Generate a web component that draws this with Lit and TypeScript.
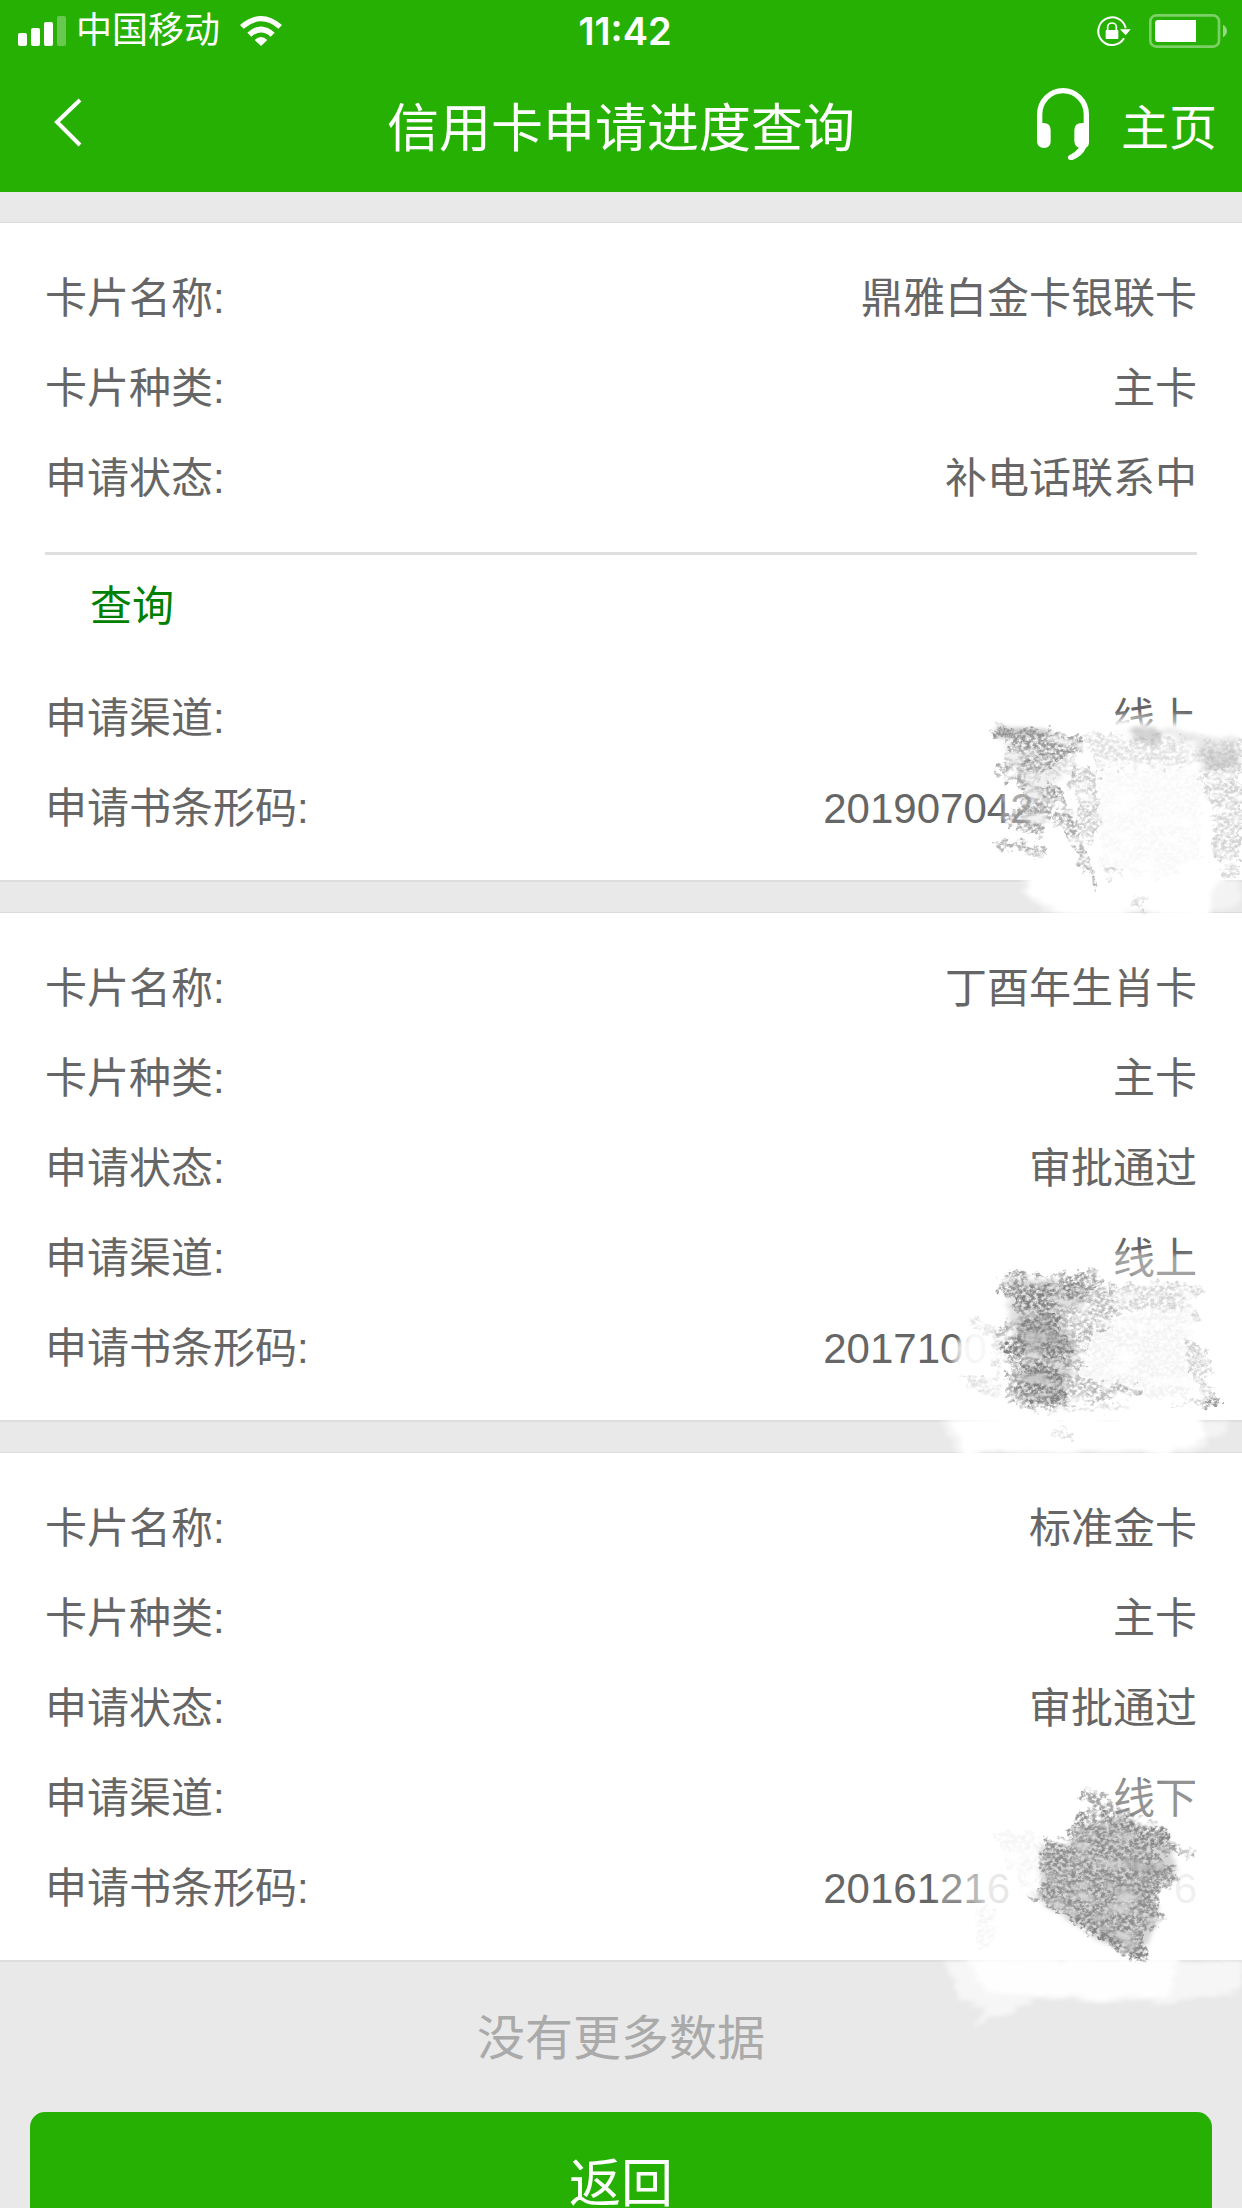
import { LitElement, html, css, svg, nothing } from "lit";
import { customElement, property } from "lit/decorators.js";

interface Application {
  name: string;
  kind: string;
  status: string;
  followUp: boolean;
  channel: string;
  codeStart: string;
  codeEnd: string;
  smudge: number;
}

const APPLICATIONS: Application[] = [
  { name: "鼎雅白金卡银联卡", kind: "主卡", status: "补电话联系中", followUp: true, channel: "线上", codeStart: "201907042", codeEnd: "", smudge: 0 },
  { name: "丁酉年生肖卡", kind: "主卡", status: "审批通过", followUp: false, channel: "线上", codeStart: "2017100", codeEnd: "", smudge: 1 },
  { name: "标准金卡", kind: "主卡", status: "审批通过", followUp: false, channel: "线下", codeStart: "20161216", codeEnd: "6", smudge: 2 },
];

/* Chalk strokes that cover the private part of each barcode number. */
const SMUDGES = [
  svg`
    <g transform="translate(0 -60)">
      <g class="erase" filter="url(#soft)">
        <path opacity=".4" d="M985 160 1260 160 1260 230 985 230Z"/>
        <path d="M1000 192 1250 188 1250 240 1000 240Z"/>
        <path opacity=".45" d="M665 370 750 370 750 500 665 500Z"/>
        <path d="M750 215 1386 215 1386 640 1300 680 1290 762 830 762 745 700 750 640Z"/>
        <path opacity=".45" d="M730 662 1386 662 1386 715 1330 750 800 758 730 700Z"/>
      </g>
      <g class="chalk" filter="url(#grain)">
        <path opacity=".8" d="M640 200 760 208 900 225 905 275 850 290 700 300 670 290 690 245 640 225Z"/>
        <path opacity=".65" d="M650 310 760 290 830 300 780 350 760 380 840 390 830 420 800 500 770 540 700 505 660 480 720 440 740 400 690 370 655 345Z"/>
        <path opacity=".6" d="M648 545 730 545 800 560 795 590 750 590 720 565 650 568Z"/>
        <path opacity=".65" d="M790 350 850 400 880 470 900 520 940 640 965 685 945 700 920 640 880 560 820 480 835 430Z"/>
        <path opacity=".4" d="M870 330 950 330 960 480 930 560 890 500 900 420 860 370Z"/>
        <path opacity=".25" d="M900 220 1386 240 1386 330 950 320ZM780 290 900 280 900 340 790 350Z"/>
        <path opacity=".35" d="M1270 330 1386 330 1386 600 1300 600 1310 460 1260 380Z"/>
        <path opacity=".3" d="M970 620 1030 620 1020 650 970 650ZM1310 620 1380 615 1370 650 1325 645ZM1055 700 1100 700 1095 760 1060 750Z"/>
        <path opacity=".06" d="M960 330 1260 330 1260 600 1130 660 960 620Z"/>
      </g>
      <g class="tone" filter="url(#soft)">
        <path opacity=".5" d="M650 205 730 205 835 218 780 226 650 228Z"/>
        <path opacity=".35" d="M1060 210 1130 200 1145 240 1110 255 1060 235Z"/>
        <path opacity=".18" d="M1000 212 1240 215 1386 250 1386 325 1270 325 1240 240Z"/>
        <path opacity=".15" d="M1275 275 1350 275 1386 325 1275 325ZM880 230 900 230 905 275 880 275Z"/>
        <path opacity=".12" d="M680 220 880 230 860 290 780 500 720 490 740 380 680 290Z"/>
      </g>
    </g>`,
  svg`
    <g class="erase" filter="url(#soft)">
      <path opacity=".4" d="M1000 90 1250 110 1250 180 1000 180Z"/>
      <path opacity=".65" d="M500 390 560 335 640 320 640 440 520 440Z"/>
      <path opacity=".85" d="M545 310 700 300 700 520 640 520 545 440Z"/>
      <path opacity=".5" d="M480 602 1340 602 1345 640 1280 660 1240 700 530 696Z"/>
      <path d="M500 590 1260 590 1270 650 1160 697 560 697Z"/>
    </g>
    <g class="chalk" filter="url(#grain)">
      <path opacity=".75" d="M655 180 700 145 730 170 950 148 965 175 940 230 700 245 660 215Z"/>
      <path d="M690 200 880 180 920 230 830 260 830 320 880 380 880 420 820 440 860 500 860 550 700 540 720 440 670 400 710 310Z"/>
      <path opacity=".65" d="M645 350 720 250 710 530 670 545 690 450Z"/>
      <path opacity=".5" d="M830 240 1000 190 1000 320 930 340 900 480 1090 500 1090 525 880 550 780 570 700 550 840 480Z"/>
      <path opacity=".32" d="M990 205 1150 185 1275 200 1270 220 1240 240 1260 310 1245 330 1220 260 1000 280Z"/>
      <path opacity=".22" d="M570 285 660 330 660 530 600 520 530 465 640 480 640 360 570 320Z"/>
      <path opacity=".35" d="M1210 350 1240 360 1300 420 1300 450 1260 460 1320 540 1310 560 1180 555 1270 530 1230 460Z"/>
      <path opacity=".7" d="M1280 530 1325 540 1305 565 1275 560Z"/>
      <path opacity=".1" d="M900 330 1240 240 1230 540 900 520Z"/>
      <path opacity=".25" d="M830 615 875 640 875 655 825 650ZM780 565 1050 555 1050 568 800 575Z"/>
    </g>
    <g class="tone" filter="url(#soft)">
      <path opacity=".25" d="M680 180 900 180 940 230 850 290 890 390 850 560 700 540 720 420 690 300Z"/>
      <path opacity=".3" d="M720 290 810 280 880 390 830 410 720 390ZM700 450 840 450 850 490 700 470ZM710 520 860 518 860 535 710 532Z"/>
    </g>`,
  svg`
    <g class="erase" filter="url(#soft)">
      <path opacity=".3" d="M985 50 1255 50 1255 180 985 180Z"/>
      <path opacity=".3" d="M480 330 560 330 560 435 480 435Z"/>
      <path opacity=".55" d="M550 330 620 330 620 440 550 440Z"/>
      <path opacity=".85" d="M610 320 1260 320 1260 440 610 440Z"/>
      <path opacity=".6" d="M490 602 1386 602 1386 700 1180 725 760 715 680 770 575 800 620 750 545 715Z"/>
      <path opacity=".85" d="M560 590 1200 590 1160 715 620 705Z"/>
    </g>
    <g class="chalk" filter="url(#grain)">
      <path opacity=".7" d="M905 85 930 88 1010 140 1160 205 1180 250 1245 275 1240 295 1120 265 1000 180 900 115Z"/>
      <path opacity=".85" d="M900 150 960 145 1020 170 1165 215 1180 250 1110 270 1195 345 1170 390 1125 400 1145 480 1130 515 1090 510 1100 600 1080 612 750 405 780 390 775 290 800 230 870 250 870 200Z"/>
      <path opacity=".8" d="M748 395 880 460 1040 550 1103 590 1085 612 1040 590 750 408Z"/>
      <path opacity=".08" d="M640 205 780 230 760 400 690 340ZM585 440 640 450 650 540 590 570Z"/>
    </g>
    <g class="tone" filter="url(#soft)">
      <path opacity=".35" d="M890 200 1010 180 1165 230 1190 350 1125 390 1130 500 1080 590 780 410 785 260 870 260Z"/>
      <path opacity=".3" d="M1010 280 1150 330 1190 355 1110 350 1010 300ZM760 400 900 475 1060 560 1100 600 1060 590 900 500 760 412ZM1000 375 1090 380 1080 405 1000 395Z"/>
    </g>`,
];

@customElement("application-card")
export class ApplicationCard extends LitElement {
  @property({ attribute: false }) item!: Application;

  static styles = css`
    :host {
      display: block;
      position: relative;
      padding: 31px 45px 26px;
      background: #fff;
      border-top: 1px solid #dcdcdc;
      border-bottom: 2px solid #dedede;
    }
    dl {
      margin: 0;
    }
    .row {
      display: flex;
      justify-content: space-between;
      line-height: 90px;
    }
    dd {
      margin: 0;
    }
    .code {
      display: flex;
      justify-content: space-between;
      width: 16ch;
    }
    .ghost {
      color: #999;
    }
    .follow {
      margin-top: 28px;
      padding: 7px 45px 22px;
      border-top: 3px solid #dfdfdf;
      line-height: 90px;
    }
    .follow a {
      color: #008000;
      text-decoration: none;
    }
    .smudge {
      position: absolute;
      right: 0;
      bottom: -100px;
      width: 462px;
      height: 320px;
      z-index: 1;
      pointer-events: none;
    }
    .erase {
      fill: #fff;
    }
    .chalk {
      fill: #808080;
    }
    .tone {
      fill: #888;
    }
  `;

  private row(label: string, value: unknown) {
    return html`<div class="row"><dt>${label}:</dt>${value}</div>`;
  }

  render() {
    const a = this.item;
    return html`
      <dl>
        ${this.row("卡片名称", html`<dd>${a.name}</dd>`)}
        ${this.row("卡片种类", html`<dd>${a.kind}</dd>`)}
        ${this.row("申请状态", html`<dd>${a.status}</dd>`)}
      </dl>
      ${a.followUp ? html`<div class="follow"><a href="#query">查询</a></div>` : nothing}
      <dl>
        ${this.row("申请渠道", html`<dd>${a.channel}</dd>`)}
        ${this.row(
          "申请书条形码",
          html`<dd class="code"><span>${a.codeStart}</span>${a.codeEnd ? html`<span class="ghost">${a.codeEnd}</span>` : nothing}</dd>`
        )}
      </dl>
      <svg class="smudge" viewBox="0 -60 1386 960" aria-hidden="true">
        <defs>
          <filter id="grain" filterUnits="userSpaceOnUse" x="0" y="-60" width="1386" height="960" color-interpolation-filters="sRGB">
            <feTurbulence type="fractalNoise" baseFrequency=".035" numOctaves="3" seed="4" result="wave" />
            <feDisplacementMap in="SourceGraphic" in2="wave" scale="60" xChannelSelector="R" yChannelSelector="G" result="rough" />
            <feTurbulence type="fractalNoise" baseFrequency=".08 .1" numOctaves="4" seed="9" />
            <feColorMatrix values="0 0 0 0 0  0 0 0 0 0  0 0 0 0 0  3.200 0 0 0 -1" result="dots" />
            <feTurbulence type="fractalNoise" baseFrequency=".015 .03" numOctaves="3" seed="21" />
            <feColorMatrix values="0 0 0 0 0  0 0 0 0 0  0 0 0 0 0  0 3 0 0 -.6" result="bands" />
            <feComposite in="rough" in2="dots" operator="in" result="grained" />
            <feComposite in="grained" in2="bands" operator="in" />
            <feGaussianBlur stdDeviation="1.500" />
          </filter>
          <filter id="soft" filterUnits="userSpaceOnUse" x="0" y="-60" width="1386" height="960" color-interpolation-filters="sRGB">
            <feTurbulence type="fractalNoise" baseFrequency=".01 .06" numOctaves="3" seed="2" result="wave" />
            <feDisplacementMap in="SourceGraphic" in2="wave" scale="50" xChannelSelector="R" yChannelSelector="A" />
            <feGaussianBlur stdDeviation="7" />
          </filter>
        </defs>
        ${SMUDGES[a.smudge]}
      </svg>
    `;
  }
}

@customElement("app-root")
export class AppRoot extends LitElement {
  static styles = css`
    :host {
      display: flex;
      flex-direction: column;
      height: 100vh;
      background: #e9e9e9;
      color: #666;
      font-family: "Liberation Sans", "Noto Sans CJK SC", sans-serif;
      font-size: 42px;
    }
    header {
      background: #27b004;
      color: #fff;
    }
    .status {
      display: grid;
      grid-template-columns: 1fr auto 1fr;
      align-items: center;
      height: 60px;
      padding: 0 15px;
      font-size: 36px;
      line-height: 62px;
    }
    .side {
      display: flex;
      align-items: center;
      gap: 18px;
    }
    .start {
      gap: 20px;
      padding-left: 3px;
    }
    .end {
      justify-content: flex-end;
    }
    .carrier {
      display: flex;
      align-items: center;
      gap: 10px;
    }
    .time {
      padding-left: 8px;
      font-family: Inter, sans-serif;
      font-size: 38px;
      font-weight: 600;
    }
    .nav {
      display: grid;
      grid-template-columns: 1fr auto 1fr;
      align-items: center;
      height: 128px;
      padding: 0 25px 4px;
    }
    .nav .end {
      gap: 32px;
    }
    h1 {
      margin: 0;
      font-size: 52px;
      font-weight: 400;
    }
    button {
      padding: 0;
      border: 0;
      background: none;
      color: inherit;
      font: inherit;
    }
    .back {
      justify-self: start;
      padding-left: 25px;
    }
    .home {
      color: inherit;
      font-size: 48px;
      text-decoration: none;
    }
    svg {
      display: block;
      fill: currentColor;
    }
    .line {
      fill: none;
      stroke: currentColor;
    }
    main {
      flex: 1;
      min-height: 0;
      overflow-y: auto;
      scrollbar-width: none;
      padding-top: 30px;
    }
    .list {
      display: flex;
      flex-direction: column;
      gap: 30px;
    }
    .empty {
      margin: 0;
      padding-top: 4px;
      color: #aaa;
      font-size: 48px;
      line-height: 146px;
      text-align: center;
    }
    .actions {
      padding: 0 30px 30px;
    }
    .return {
      display: block;
      width: 100%;
      border-radius: 15px;
      background: #27b004;
      color: #fff;
      font-size: 52px;
      line-height: 144px;
    }
  `;

  render() {
    return html`
      <header>
        <div class="status">
          <div class="side start">
            <div class="carrier">
              <svg width="48" height="30" viewBox="0 0 48 30" aria-hidden="true">
                <rect x="0" y="17" width="9" height="13" rx="2" />
                <rect x="13" y="12" width="9" height="18" rx="2" />
                <rect x="26" y="6" width="9" height="24" rx="2" />
                <rect x="39" y="0" width="9" height="30" rx="2" opacity=".3" />
              </svg>
              <span>中国移动</span>
            </div>
            <svg width="42" height="30" viewBox="720 45 126 90" aria-hidden="true">
              <path d="M720 72Q783 18 846 72L835 83Q783 39 731 83Z" />
              <path d="M742 95Q783 58 824 95L812 107Q783 82 754 107Z" />
              <path d="M764 117Q783 99 802 117L783 135Z" />
            </svg>
          </div>
          <span class="time">11:42</span>
          <div class="side end">
            <svg width="34" height="30" viewBox="411 45 102 90" aria-hidden="true">
              <path class="line" stroke-width="6" d="M497 82A41.500 41.500 0 1 0 492 112" />
              <path d="M480 85H512L497 103Z" />
              <rect x="437" y="87" width="38" height="27" rx="3" />
              <path class="line" stroke-width="5" d="M443 88V78a13 12 0 0 1 26 0V88" />
            </svg>
            <svg width="78" height="34" viewBox="567 39 234 102" aria-hidden="true">
              <rect class="line" x="571" y="43" width="206" height="94" rx="18" stroke-width="8" opacity=".4" />
              <path d="M595 57H708V123H595a10 10 0 0 1-10-10V67a10 10 0 0 1 10-10Z" />
              <path opacity=".5" d="M789 71Q801 78 801 90T789 109Z" />
            </svg>
          </div>
        </div>
        <div class="nav">
          <button class="back" aria-label="后退">
            <svg width="32" height="56" viewBox="0 0 32 56">
              <path class="line" stroke-width="4" d="M30 4 7 26 30 49" />
            </svg>
          </button>
          <h1>信用卡申请进度查询</h1>
          <div class="side end">
            <button aria-label="客服">
              <svg width="52" height="72" viewBox="231 267 156 216">
                <path class="line" stroke-width="16" d="M239 392V346a70 71 0 0 1 140 0V430" />
                <path d="M231 372H250q22 0 22 22V427q0 20-20 20t-21-20Z" />
                <path d="M387 372H366q-23 0-23 22V425q0 16 14 21Q344 462 328 469q-7 4-3 11 4 5 14 2Q368 470 378 446q9-5 9-14Z" />
              </svg>
            </button>
            <a class="home" href="#home">主页</a>
          </div>
        </div>
      </header>
      <main>
        <div class="list">${APPLICATIONS.map((a) => html`<application-card .item=${a}></application-card>`)}</div>
        <p class="empty">没有更多数据</p>
        <div class="actions"><button class="return">返回</button></div>
      </main>
    `;
  }
}
